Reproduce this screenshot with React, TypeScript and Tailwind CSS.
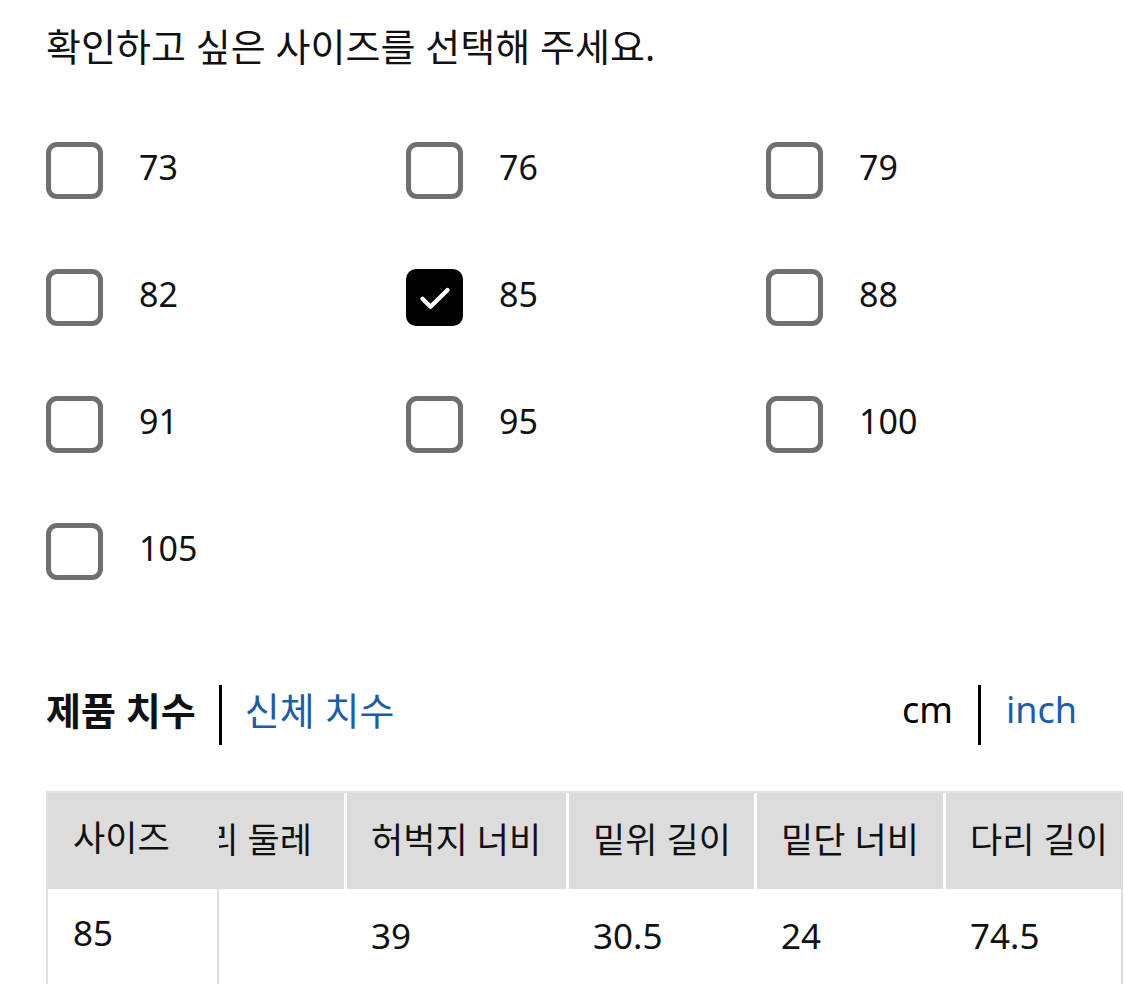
import React, { useEffect, useRef, useState } from 'react';

const SIZES = ['73', '76', '79', '82', '85', '88', '91', '95', '100', '105'];

const COLUMNS = [
  { label: '허리 둘레', width: 'w-[194px] min-w-[194px]' },
  { label: '허벅지 너비', width: 'w-[222px] min-w-[222px]' },
  { label: '밑위 길이', width: 'w-[188px] min-w-[188px]' },
  { label: '밑단 너비', width: 'w-[189px] min-w-[189px]' },
  { label: '다리 길이', width: 'w-[180px] min-w-[180px]' },
];

const ROW = ['', '39', '30.5', '24', '74.5'];

const CheckBox = ({ checked }: { checked: boolean }) =>
  checked ? (
    <span className="w-[57px] h-[57px] rounded-[10px] bg-black flex items-center justify-center shrink-0">
      <svg width="40" height="40" viewBox="0 0 24 24" fill="none" stroke="white" strokeWidth="2.6" strokeLinecap="round" strokeLinejoin="round">
        <path d="M4.5 12.5l4.8 4.8L19.5 7.2" />
      </svg>
    </span>
  ) : (
    <span className="w-[57px] h-[57px] rounded-[11px] border-[5px] border-[#6f6f6f] bg-white shrink-0" />
  );

const App = () => {
  const [selected, setSelected] = useState('85');
  const [unit, setUnit] = useState<'cm' | 'inch'>('cm');
  const scrollRef = useRef<HTMLDivElement>(null);

  useEffect(() => {
    // table sits scrolled to its right end, second column slides under the sticky one
    if (scrollRef.current) scrollRef.current.scrollLeft = scrollRef.current.scrollWidth;
  }, []);

  return (
    <div className="min-h-screen bg-white text-[#111] pl-[46px] pt-[20px] font-['Noto_Sans','Noto_Sans_CJK_KR',sans-serif] overflow-hidden">
      <p className="text-[38px] leading-[52px]">확인하고 싶은 사이즈를 선택해 주세요.</p>

      <div className="mt-[70px] grid grid-cols-[360px_360px_360px] gap-y-[70px]">
        {SIZES.map((s) => (
          <button key={s} onClick={() => setSelected(s)} className="flex items-center gap-[36px] text-left">
            <CheckBox checked={selected === s} />
            <span className="text-[34px] leading-none pb-[8px]">{s}</span>
          </button>
        ))}
      </div>

      <div className="mt-[105px] pr-[48px] flex items-center justify-between">
        <div className="flex items-center">
          <span className="text-[38px] leading-none pb-[10px] font-bold">제품 치수</span>
          <span className="mx-[23px] w-[3px] h-[60px] bg-black" />
          <span className="text-[38px] leading-none pb-[10px] text-[#1f5ca6]">신체 치수</span>
        </div>
        <div className="flex items-center">
          <span onClick={() => setUnit('cm')} className={`text-[36px] leading-none pb-[10px] ${unit === 'cm' ? 'text-black' : 'text-[#1f5ca6]'}`}>cm</span>
          <span className="mx-[25px] w-[3px] h-[60px] bg-black" />
          <span onClick={() => setUnit('inch')} className={`text-[36px] leading-none pb-[10px] ${unit === 'inch' ? 'text-black' : 'text-[#1f5ca6]'}`}>inch</span>
        </div>
      </div>

      <div
        ref={scrollRef}
        className="mt-[46px] mr-[2px] overflow-x-auto [scrollbar-width:none] border-l-2 border-t-2 border-[#e2e2e2]"
      >
        <table className="w-max border-separate border-spacing-0 text-[35px] whitespace-nowrap">
          <thead>
            <tr className="h-[96px]">
              <th className="sticky left-0 z-10 w-[171px] min-w-[171px] bg-[#dcdcdc] text-left font-normal pl-[25px] pb-[6px] border-r-2 border-[#dcdcdc]">
                사이즈
              </th>
              {COLUMNS.map((c, i) => (
                <th
                  key={c.label}
                  className={`${c.width} bg-[#dcdcdc] text-left font-normal pl-[24px] pb-[2px] ${i > 0 ? 'border-l-[3px] border-white' : ''} ${i === COLUMNS.length - 1 ? 'border-r-2 border-r-[#dcdcdc]' : ''}`}
                >
                  {c.label}
                </th>
              ))}
            </tr>
          </thead>
          <tbody>
            <tr className="h-[94px]">
              <td className="sticky left-0 z-10 bg-white pl-[25px] pb-[6px] border-r-2 border-[#dcdcdc]">85</td>
              {ROW.map((v, i) => (
                <td
                  key={i}
                  className={`pl-[24px] ${i > 0 ? 'border-l-[3px] border-white' : ''} ${i === ROW.length - 1 ? 'border-r-2 border-r-[#dcdcdc]' : ''}`}
                >
                  {v}
                </td>
              ))}
            </tr>
            <tr className="h-[94px]">
              <td className="sticky left-0 z-10 bg-white border-r-2 border-[#dcdcdc]" />
              {ROW.map((_, i) => (
                <td key={i} className={i === ROW.length - 1 ? 'border-r-2 border-r-[#dcdcdc]' : ''} />
              ))}
            </tr>
          </tbody>
        </table>
      </div>
    </div>
  );
};

export default App;
